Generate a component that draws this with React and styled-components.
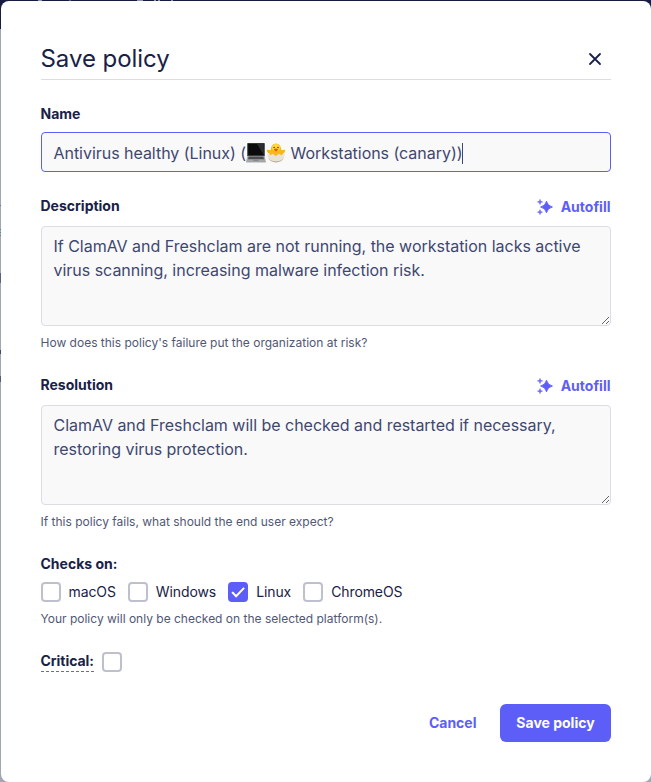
import React from "react";
import styled, { createGlobalStyle } from "styled-components";

const INK = "#192147";
const TEXT = "#3e4771";
const MUTED = "#515774";
const VIOLET = "#5d5df8";

const GlobalStyle = createGlobalStyle`
  * { box-sizing: border-box; }
  body { margin: 0; background: #a3a6b5; font-family: Inter, sans-serif; }
`;

const Backdrop = styled.div`
  width: 651px;
  height: 782px;
  padding: 1px 0 0 1px;
  overflow: hidden;
  background:
    linear-gradient(#9294a8, #9294a8) 38px 0 / 4px 1px no-repeat,
    linear-gradient(#5a5d78, #5a5d78) 69px 0 / 2px 1px no-repeat,
    linear-gradient(#9294a8, #9294a8) 137px 0 / 6px 1px no-repeat,
    linear-gradient(#9294a8, #9294a8) 154px 0 / 2px 1px no-repeat,
    linear-gradient(#9294a8, #9294a8) 158px 0 / 2px 1px no-repeat,
    linear-gradient(#9294a8, #9294a8) 171px 0 / 2px 1px no-repeat,
    linear-gradient(#7b6ba0, #7b6ba0) 0 205px / 1px 1px no-repeat,
    linear-gradient(#4c927b, #4c927b) 0 229px / 1px 1px no-repeat,
    linear-gradient(#4c927b, #4c927b) 0 232px / 1px 1px no-repeat,
    linear-gradient(#4c927b, #4c927b) 0 235px / 1px 1px no-repeat,
    linear-gradient(#5b6083, #5b6083) 0 273px / 1px 10px no-repeat,
    linear-gradient(#444967, #444967) 0 350px / 1px 4px no-repeat,
    linear-gradient(#565b78, #565b78) 0 376px / 1px 6px no-repeat,
    linear-gradient(#181b42, #181b42) 0 0 / 100% 29px no-repeat,
    #a3a6b5;
`;

const Modal = styled.form`
  display: flex;
  flex-direction: column;
  width: 650px;
  height: 781px;
  padding: 40px 40px 40px 39.5px;
  border-radius: 8px;
  background: #fff;
  color: ${INK};
`;

const Header = styled.header`
  display: flex;
  justify-content: space-between;
  align-items: center;
  height: 39px;
  padding-bottom: 2px;
  border-bottom: 1px solid #dcdde1;
  margin-bottom: 25px;
`;

const Title = styled.h1`
  margin: 0;
  font-size: 24px;
  line-height: 36px;
  font-weight: 400;
  letter-spacing: -0.05px;
`;

const IconButton = styled.button`
  display: flex;
  padding: 0;
  margin-right: 8px;
  border: 0;
  background: none;
`;

const Field = styled.section`
  display: flex;
  flex-direction: column;
  margin-bottom: ${(p) => p.$gap}px;
`;

const LabelRow = styled.div`
  display: flex;
  justify-content: space-between;
  height: 18px;
  margin-bottom: ${(p) => p.$gap}px;
`;

const Label = styled.span`
  font-size: 14px;
  line-height: 18px;
  font-weight: 700;
`;

const AutofillButton = styled.button`
  display: flex;
  align-items: center;
  gap: 8px;
  height: 20px;
  padding: 0;
  margin-right: 0.5px;
  border: 0;
  background: none;
  color: ${VIOLET};
  font: 700 14px/20px Inter, sans-serif;
`;

const NameInput = styled.div`
  display: flex;
  align-items: center;
  height: 40px;
  padding: 2px 12px 0;
  border: 1px solid ${VIOLET};
  border-radius: 4px;
  background: #f9f9f9;
  color: ${TEXT};
  font-size: 16px;
  line-height: 24px;
  letter-spacing: -0.035px;
  white-space: pre;
`;

const Caret = styled.span`
  width: 1px;
  height: 21px;
  background: ${TEXT};
`;

const TextArea = styled.textarea`
  display: block;
  width: 570.5px;
  height: 100px;
  padding: 7px 12px;
  border: 1px solid #dcdce6;
  border-radius: 4px;
  outline: 0;
  background: #f9f9f9;
  color: ${TEXT};
  font: 400 16px/24px Inter, sans-serif;
  letter-spacing: -0.02px;
  resize: both;
`;

const Help = styled.p`
  margin: 0;
  color: ${MUTED};
  font-size: 12px;
  line-height: 18px;
  padding-top: ${(p) => p.$top}px;
`;

const Platforms = styled.div`
  display: flex;
  gap: 12px;
`;

const Option = styled.label`
  display: flex;
  align-items: center;
  gap: 8px;
  height: 20px;
  font-size: 14px;
  line-height: 20px;
  letter-spacing: -0.1px;
`;

const Box = styled.span`
  display: flex;
  align-items: center;
  justify-content: center;
  width: 20px;
  height: 20px;
  border: 2px solid ${(p) => (p.$checked ? VIOLET : "#bfc0ce")};
  border-radius: 4px;
  background: ${(p) => (p.$checked ? VIOLET : "#fff")};
`;

const CriticalRow = styled.div`
  display: flex;
  align-items: flex-start;
  gap: 8px;
  height: 20px;
`;

const CriticalLabel = styled(Label)`
  height: 20px;
  border-bottom: 1px dashed #6b7089;
  letter-spacing: -0.05px;
`;

const Footer = styled.footer`
  display: flex;
  justify-content: flex-end;
  gap: 7.5px;
  margin-top: 32px;
`;

const Button = styled.button`
  height: 38px;
  padding: 0 16px;
  border: 0;
  border-radius: 6px;
  background: ${(p) => (p.$primary ? VIOLET : "none")};
  color: ${(p) => (p.$primary ? "#fff" : VIOLET)};
  min-width: ${(p) => (p.$primary ? "111px" : "0")};
  font: 700 14px/38px Inter, sans-serif;
`;

const CloseIcon = () => (
  <svg width="16" height="16" viewBox="0 0 16 16" fill="none" stroke={INK} strokeWidth="1.8" strokeLinecap="round">
    <path d="M3 3l10 10M13 3L3 13" />
  </svg>
);

const SparkleIcon = () => (
  <svg width="16" height="16" viewBox="0 0 16 16" fill={VIOLET}>
    <path d="M9.5 2.2Q10.5 7 15.4 8Q10.5 9 9.5 13.8Q8.5 9 3.6 8Q8.5 7 9.5 2.2Z" stroke={VIOLET} strokeWidth=".9" strokeLinejoin="round" />
    <path d="M3 .9v4M1 2.9h4M3 11.1v4M1 13.1h4" stroke={VIOLET} strokeWidth="1.3" strokeLinecap="round" />
  </svg>
);

const CheckSvg = styled.svg`
  flex-shrink: 0;
`;

const CheckIcon = () => (
  <CheckSvg width="16" height="16" viewBox="0 0 16 16" fill="none" stroke="#fff" strokeWidth="2" strokeLinecap="square">
    <path d="M2.8 8.8l3.3 3.4 7.3-7.6" />
  </CheckSvg>
);

const LaptopIcon = () => (
  <svg width="20" height="20" viewBox="0 0 20 20">
    <path d="M2 0h16q.8 0 .8.8V13H1.2V.8Q1.2 0 2 0z" fill="#34373a" />
    <path d="M2.2 1h15.6v11H2.2z" fill="#0b0b0c" />
    <path d="M11 1h6.8v11z" fill="#2c2d2f" />
    <path d="M1.3 13h17.4l1.1 5.5H.2z" fill="#a7a8aa" />
    <path d="M2.6 13.5h14.8l.6 2.7H2z" fill="#4b4c4f" />
    <path d="M7.4 16.6h5.2l.3 1.5H7.1z" fill="#88898c" />
    <path d="M.2 18.5h19.6v.8H.2z" fill="#77787b" />
  </svg>
);

const ChickIcon = () => (
  <svg width="20" height="20" viewBox="0 0 20 20">
    <path d="M3.5 10.5Q.4 9.5 1 6.5Q3 7.4 4.8 7Q5 .8 10 .6Q15 .8 15.2 7Q17 7.4 19 6.5Q19.6 9.5 16.5 11V14h-13z" fill="#f9b71c" />
    <ellipse cx="10" cy="4.5" rx="4" ry="3.5" fill="#ffd83d" />
    <circle cx="8.1" cy="4.4" r=".75" fill="#493018" />
    <circle cx="12" cy="4.4" r=".75" fill="#493018" />
    <path d="M7.7 6.4q2.3-1.8 4.6 0l-2.3 2.4z" fill="#e8590f" />
    <path d="M1.2 10.7l3 1.6 2.5-1.6 3 2.2 3.2-2.2 2.6 1.6 3.3-1.6Q18.6 19.2 10 19.4Q1.4 19.2 1.2 10.7z" fill="#e9e3d5" />
    <path d="M2.4 15Q5 18.5 10 18.3Q15 18.5 17.6 15Q15.7 19.3 10 19.4Q4.3 19.3 2.4 15z" fill="#b9b09e" />
  </svg>
);

const GENERATED_FIELDS = [
  {
    label: "Description",
    value: "If ClamAV and Freshclam are not running, the workstation lacks active virus scanning, increasing malware infection risk.",
    help: "How does this policy's failure put the organization at risk?",
  },
  {
    label: "Resolution",
    value: "ClamAV and Freshclam will be checked and restarted if necessary, restoring virus protection.",
    help: "If this policy fails, what should the end user expect?",
  },
];

const PLATFORMS = [
  { name: "macOS" },
  { name: "Windows" },
  { name: "Linux", checked: true },
  { name: "ChromeOS" },
];

const Checkbox = ({ checked }) => <Box $checked={checked}>{checked && <CheckIcon />}</Box>;

export default function App() {
  return (
    <>
      <GlobalStyle />
      <Backdrop>
        <Modal>
          <Header>
            <Title>Save policy</Title>
            <IconButton type="button" aria-label="Close"><CloseIcon /></IconButton>
          </Header>
          <Field $gap={25}>
            <LabelRow $gap={9}><Label>Name</Label></LabelRow>
            <NameInput>
              <span>Antivirus healthy (Linux) (</span>
              <LaptopIcon />
              <ChickIcon />
              <span> Workstations (canary))</span>
              <Caret />
            </NameInput>
          </Field>
          {GENERATED_FIELDS.map((f) => (
            <Field key={f.label} $gap={24}>
              <LabelRow $gap={11}>
                <Label>{f.label}</Label>
                <AutofillButton type="button"><SparkleIcon />Autofill</AutofillButton>
              </LabelRow>
              <TextArea defaultValue={f.value} spellCheck={false} />
              <Help $top={8}>{f.help}</Help>
            </Field>
          ))}
          <Field $gap={24}>
            <LabelRow $gap={9}><Label>Checks on:</Label></LabelRow>
            <Platforms>
              {PLATFORMS.map((p) => (
                <Option key={p.name}><Checkbox checked={p.checked} />{p.name}</Option>
              ))}
            </Platforms>
            <Help $top={8}>Your policy will only be checked on the selected platform(s).</Help>
          </Field>
          <CriticalRow>
            <CriticalLabel>Critical:</CriticalLabel>
            <Checkbox />
          </CriticalRow>
          <Footer>
            <Button type="button">Cancel</Button>
            <Button type="button" $primary>Save policy</Button>
          </Footer>
        </Modal>
      </Backdrop>
    </>
  );
}
